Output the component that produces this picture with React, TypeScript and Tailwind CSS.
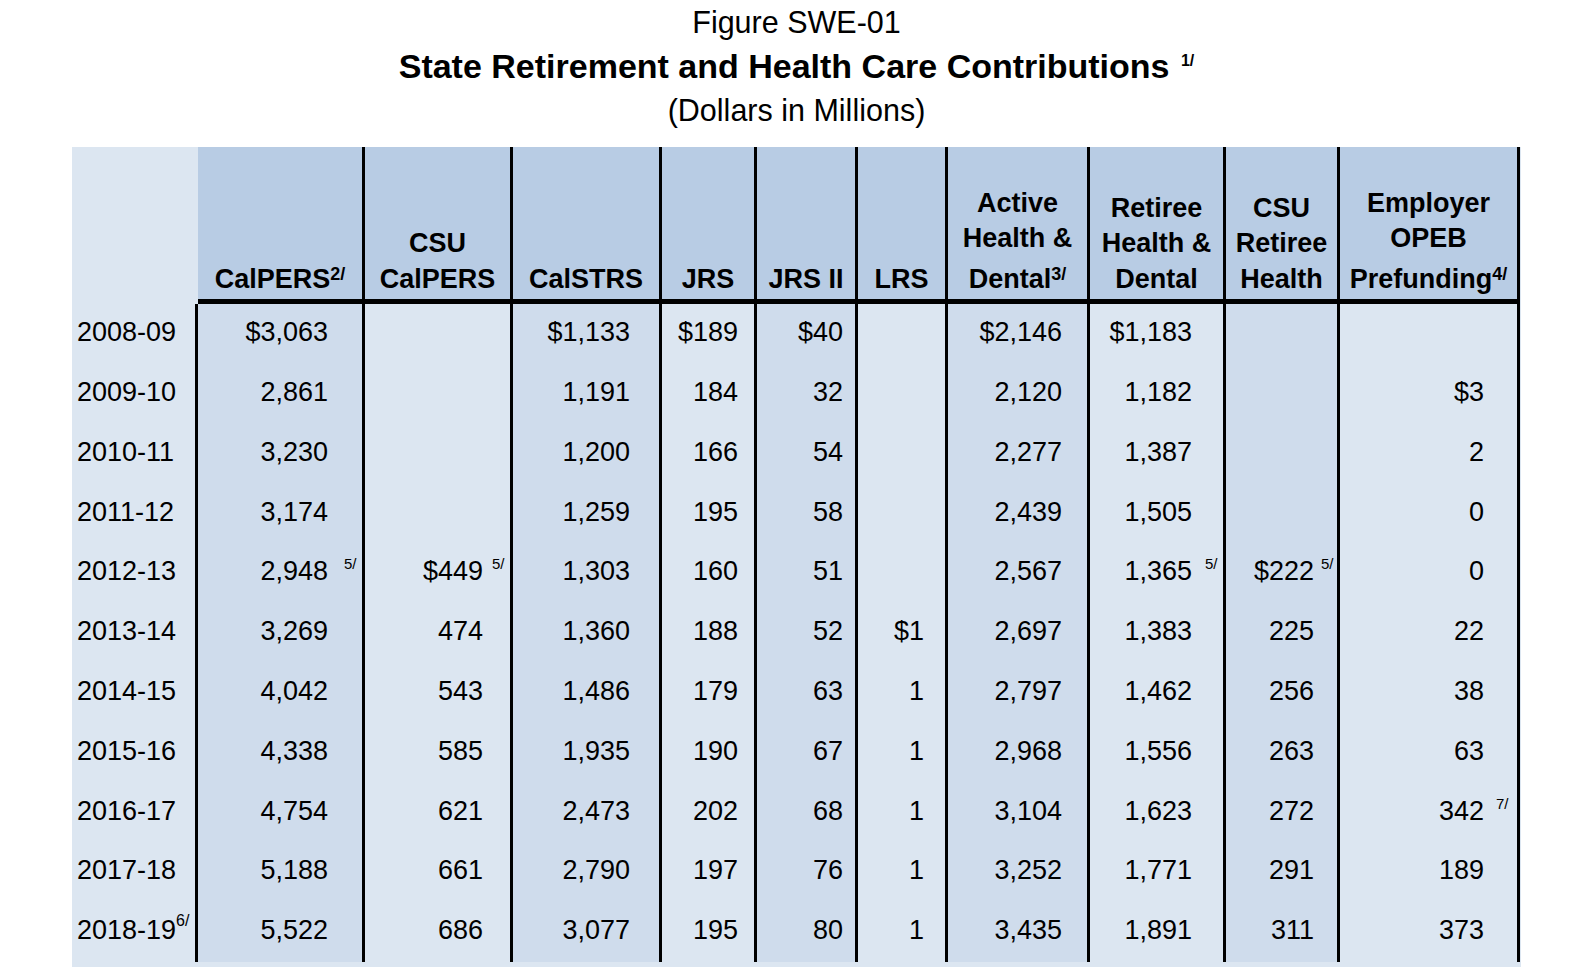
import React from "react";

// Column setup: widths include the 3px right rule
type Col = {
    label: string[];
    sup?: string;
    w: string;
    bg: string;
    pr: string;
    gap: string;
    lift?: boolean;
};

const DARK = "bg-[#cfdcec]";
const LIGHT = "bg-[#dce6f1]";

const cols: Col[] = [
    { label: ["CalPERS"], sup: "2/", w: "w-[167px]", bg: DARK, pr: "pr-[34px]", gap: "ml-[16px]", lift: true },
    { label: ["CSU", "CalPERS"], w: "w-[148px]", bg: LIGHT, pr: "pr-[27px]", gap: "ml-[9px]" },
    { label: ["CalSTRS"], w: "w-[149px]", bg: DARK, pr: "pr-[29px]", gap: "ml-[9px]" },
    { label: ["JRS"], w: "w-[95px]", bg: LIGHT, pr: "pr-[16px]", gap: "ml-[9px]" },
    { label: ["JRS II"], w: "w-[101px]", bg: DARK, pr: "pr-[12px]", gap: "ml-[9px]" },
    { label: ["LRS"], w: "w-[90px]", bg: LIGHT, pr: "pr-[21px]", gap: "ml-[9px]" },
    { label: ["Active", "Health &", "Dental"], sup: "3/", w: "w-[142px]", bg: DARK, pr: "pr-[25px]", gap: "ml-[9px]", lift: true },
    { label: ["Retiree", "Health &", "Dental"], w: "w-[136px]", bg: LIGHT, pr: "pr-[31px]", gap: "ml-[13px]" },
    { label: ["CSU", "Retiree", "Health"], w: "w-[114px]", bg: DARK, pr: "pr-[23px]", gap: "ml-[7px]" },
    { label: ["Employer", "OPEB", "Prefunding"], sup: "4/", w: "w-[180px]", bg: LIGHT, pr: "pr-[33px]", gap: "ml-[12px]", lift: true },
];

// value|footnote
const rows: { year: string; yearNote?: string; vals: string[] }[] = [
    { year: "2008-09", vals: ["$3,063", "", "$1,133", "$189", "$40", "", "$2,146", "$1,183", "", ""] },
    { year: "2009-10", vals: ["2,861", "", "1,191", "184", "32", "", "2,120", "1,182", "", "$3"] },
    { year: "2010-11", vals: ["3,230", "", "1,200", "166", "54", "", "2,277", "1,387", "", "2"] },
    { year: "2011-12", vals: ["3,174", "", "1,259", "195", "58", "", "2,439", "1,505", "", "0"] },
    { year: "2012-13", vals: ["2,948|5/", "$449|5/", "1,303", "160", "51", "", "2,567", "1,365|5/", "$222|5/", "0"] },
    { year: "2013-14", vals: ["3,269", "474", "1,360", "188", "52", "$1", "2,697", "1,383", "225", "22"] },
    { year: "2014-15", vals: ["4,042", "543", "1,486", "179", "63", "1", "2,797", "1,462", "256", "38"] },
    { year: "2015-16", vals: ["4,338", "585", "1,935", "190", "67", "1", "2,968", "1,556", "263", "63"] },
    { year: "2016-17", vals: ["4,754", "621", "2,473", "202", "68", "1", "3,104", "1,623", "272", "342|7/"] },
    { year: "2017-18", vals: ["5,188", "661", "2,790", "197", "76", "1", "3,252", "1,771", "291", "189"] },
    { year: "2018-19", yearNote: "6/", vals: ["5,522", "686", "3,077", "195", "80", "1", "3,435", "1,891", "311", "373"] },
];

function HeaderCell({ col }: { col: Col }) {
    return (
        <div className={`${col.w} h-[157px] shrink-0 bg-[#b8cce4] border-r-[3px] border-b-[5px] border-black flex flex-col justify-end items-center pb-[2px] font-bold text-[27px]`}>
            {col.label.map((line, i) => {
                const last = i === col.label.length - 1;
                return (
                    <div key={i} className={`leading-[35.5px] whitespace-nowrap ${last && col.lift ? "mt-[5px]" : ""}`}>
                        {line}
                        {last && col.sup && <sup className="text-[18px] top-[-8px] font-bold">{col.sup}</sup>}
                    </div>
                );
            })}
        </div>
    );
}

function ValueCell({ col, value }: { col: Col; value: string }) {
    const [num, note] = value.split("|");
    return (
        <div className={`${col.w} h-[59.8px] shrink-0 ${col.bg} border-r-[3px] border-black flex items-center justify-end pb-[3px] ${col.pr}`}>
            <span className="relative whitespace-nowrap">
                {num}
                {note && (
                    <span className={`absolute left-full top-[5px] ${col.gap} text-[15px] leading-none`}>{note}</span>
                )}
            </span>
        </div>
    );
}

export default function App() {
    return (
        <div className="min-h-[968px] bg-white text-black pt-[2px]" style={{ fontFamily: '"Liberation Sans", Arial, sans-serif' }}>
            <div className="ml-[72px] w-[1449px] text-center">
                <div className="text-[30.5px] leading-[40px]">Figure SWE-01</div>
                <div className="mt-[4px] text-[34px] leading-[40px] font-bold">
                    State Retirement and Health Care Contributions{" "}
                    <sup className="text-[16px] top-[-12px] ml-[2px]">1/</sup>
                </div>
                <div className="mt-[4px] text-[30.5px] leading-[40px]">(Dollars in Millions)</div>
            </div>

            <div className="ml-[72px] mt-[17px] w-[1449px] bg-[#dce6f1] pb-[5px]">
                {/* header */}
                <div className="flex">
                    <div className="w-[126px] h-[157px] shrink-0 bg-[#dce6f1]" />
                    {cols.map((c, i) => (
                        <HeaderCell key={i} col={c} />
                    ))}
                </div>

                {/* body */}
                <div className="text-[27px]">
                    {rows.map((r) => (
                        <div key={r.year} className="flex">
                            <div className="w-[126px] h-[59.8px] shrink-0 bg-[#dce6f1] border-r-[3px] border-black flex items-center pl-[5px] pb-[3px] whitespace-nowrap">
                                {r.year}
                                {r.yearNote && <sup className="text-[16px] top-[-9px]">{r.yearNote}</sup>}
                            </div>
                            {cols.map((c, i) => (
                                <ValueCell key={i} col={c} value={r.vals[i]} />
                            ))}
                        </div>
                    ))}
                </div>
            </div>
        </div>
    );
}
